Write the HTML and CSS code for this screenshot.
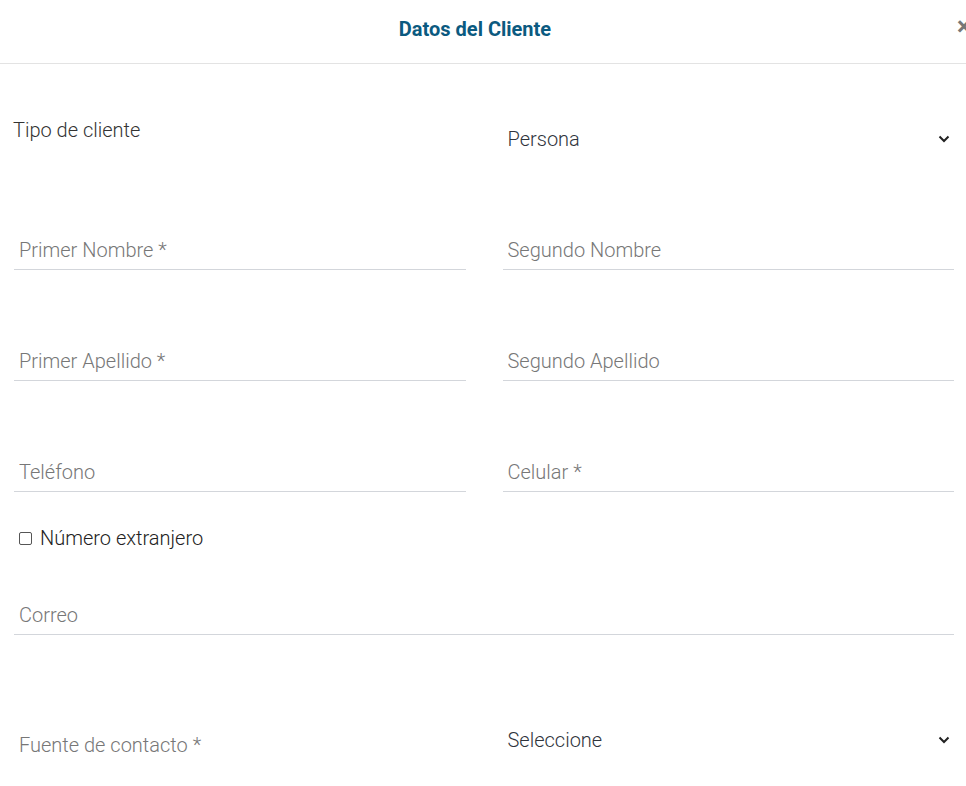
FILE: index.html
```html
<!DOCTYPE html>
<html lang="es">
<head>
<meta charset="utf-8">
<title>Datos del Cliente</title>
<link rel="stylesheet" href="styles.css">
</head>
<body>
<div class="modal">
  <header class="modal-header">
    <h1 class="modal-title">Datos del Cliente</h1>
    <span class="close">&times;</span>
  </header>
  <form class="form">
    <div class="row row-first">
      <label class="static-label">Tipo de cliente</label>
      <div class="select">
        <span>Persona</span>
        <svg class="chev" width="12" height="8" viewBox="0 0 12 8"><path d="M1.5 1.5 L6 6 L10.5 1.5" fill="none" stroke="#222" stroke-width="2"/></svg>
      </div>
    </div>
    <div class="row">
      <input class="field" placeholder="Primer Nombre *">
      <input class="field" placeholder="Segundo Nombre">
    </div>
    <div class="row">
      <input class="field" placeholder="Primer Apellido *">
      <input class="field" placeholder="Segundo Apellido">
    </div>
    <div class="row">
      <input class="field" placeholder="Teléfono">
      <input class="field" placeholder="Celular *">
    </div>
    <label class="check"><span class="box"></span>Número extranjero</label>
    <div class="row row-full">
      <input class="field" placeholder="Correo">
    </div>
    <div class="row row-last">
      <div class="fake-placeholder">Fuente de contacto *</div>
      <div class="select select-up">
        <span>Seleccione</span>
        <svg class="chev" width="12" height="8" viewBox="0 0 12 8"><path d="M1.5 1.5 L6 6 L10.5 1.5" fill="none" stroke="#222" stroke-width="2"/></svg>
      </div>
    </div>
  </form>
</div>
</body>
</html>
```
FILE: styles.css
```css
* { box-sizing: border-box; }
html, body { margin: 0; padding: 0; background: #fff; }
body { font-family: Roboto, "Liberation Sans", sans-serif; overflow: hidden; }
.modal { width: 966px; }
.modal-header {
  position: relative;
  height: 64px;
  border-bottom: 1px solid #e3e3e3;
  display: flex;
  align-items: center;
  justify-content: center;
  padding-right: 16px;
  padding-bottom: 6px;
}
.modal-title {
  margin: 0;
  font-size: 20px;
  font-weight: 700;
  color: #0b5a80;
  letter-spacing: 0;
}
.close {
  position: absolute;
  left: 957px;
  top: 13px;
  font-size: 26px;
  font-weight: 700;
  color: #777;
  line-height: 1;
}
.form {
  padding: 0 12px 0 14px;
}
.row {
  display: grid;
  grid-template-columns: 1fr 1fr;
  column-gap: 37px;
  margin-top: 71px;
}
.row-first { margin-top: 52px; align-items: start; }
.row-full { grid-template-columns: 1fr; margin-top: 46px; }
.row-last { margin-top: 90px; align-items: start; }
.static-label {
  font-size: 20px;
  font-weight: 300;
  color: #333;
  line-height: 24px;
  padding-top: 2px;
  margin-left: -1px;
}
.select {
  display: flex;
  align-items: center;
  justify-content: space-between;
  height: 40px;
  padding: 0 4px 0 5px;
  font-size: 20px;
  font-weight: 300;
  color: #2f343c;
  margin-top: 3px;
}
.select-up { margin-top: -5px; }
.chev { display: block; }
.field {
  display: block;
  width: 100%;
  height: 40px;
  border: 0;
  border-bottom: 1px solid #d3d6db;
  padding: 0 5px;
  font-family: Roboto, "Liberation Sans", sans-serif;
  font-size: 20px;
  font-weight: 300;
  color: #333;
  outline: none;
  background: transparent;
}
.field::placeholder { color: #777; opacity: 1; }
.fake-placeholder {
  font-size: 20px;
  font-weight: 300;
  color: #777;
  padding: 8px 5px 0;
  line-height: 24px;
  height: 40px;
}
.check {
  display: flex;
  align-items: center;
  gap: 8px;
  margin-top: 35px;
  padding-left: 5px;
  font-size: 20px;
  font-weight: 300;
  color: #222;
  line-height: 22px;
}
.box {
  width: 13px;
  height: 13px;
  border: 1px solid #555;
  border-radius: 2px;
}
```
